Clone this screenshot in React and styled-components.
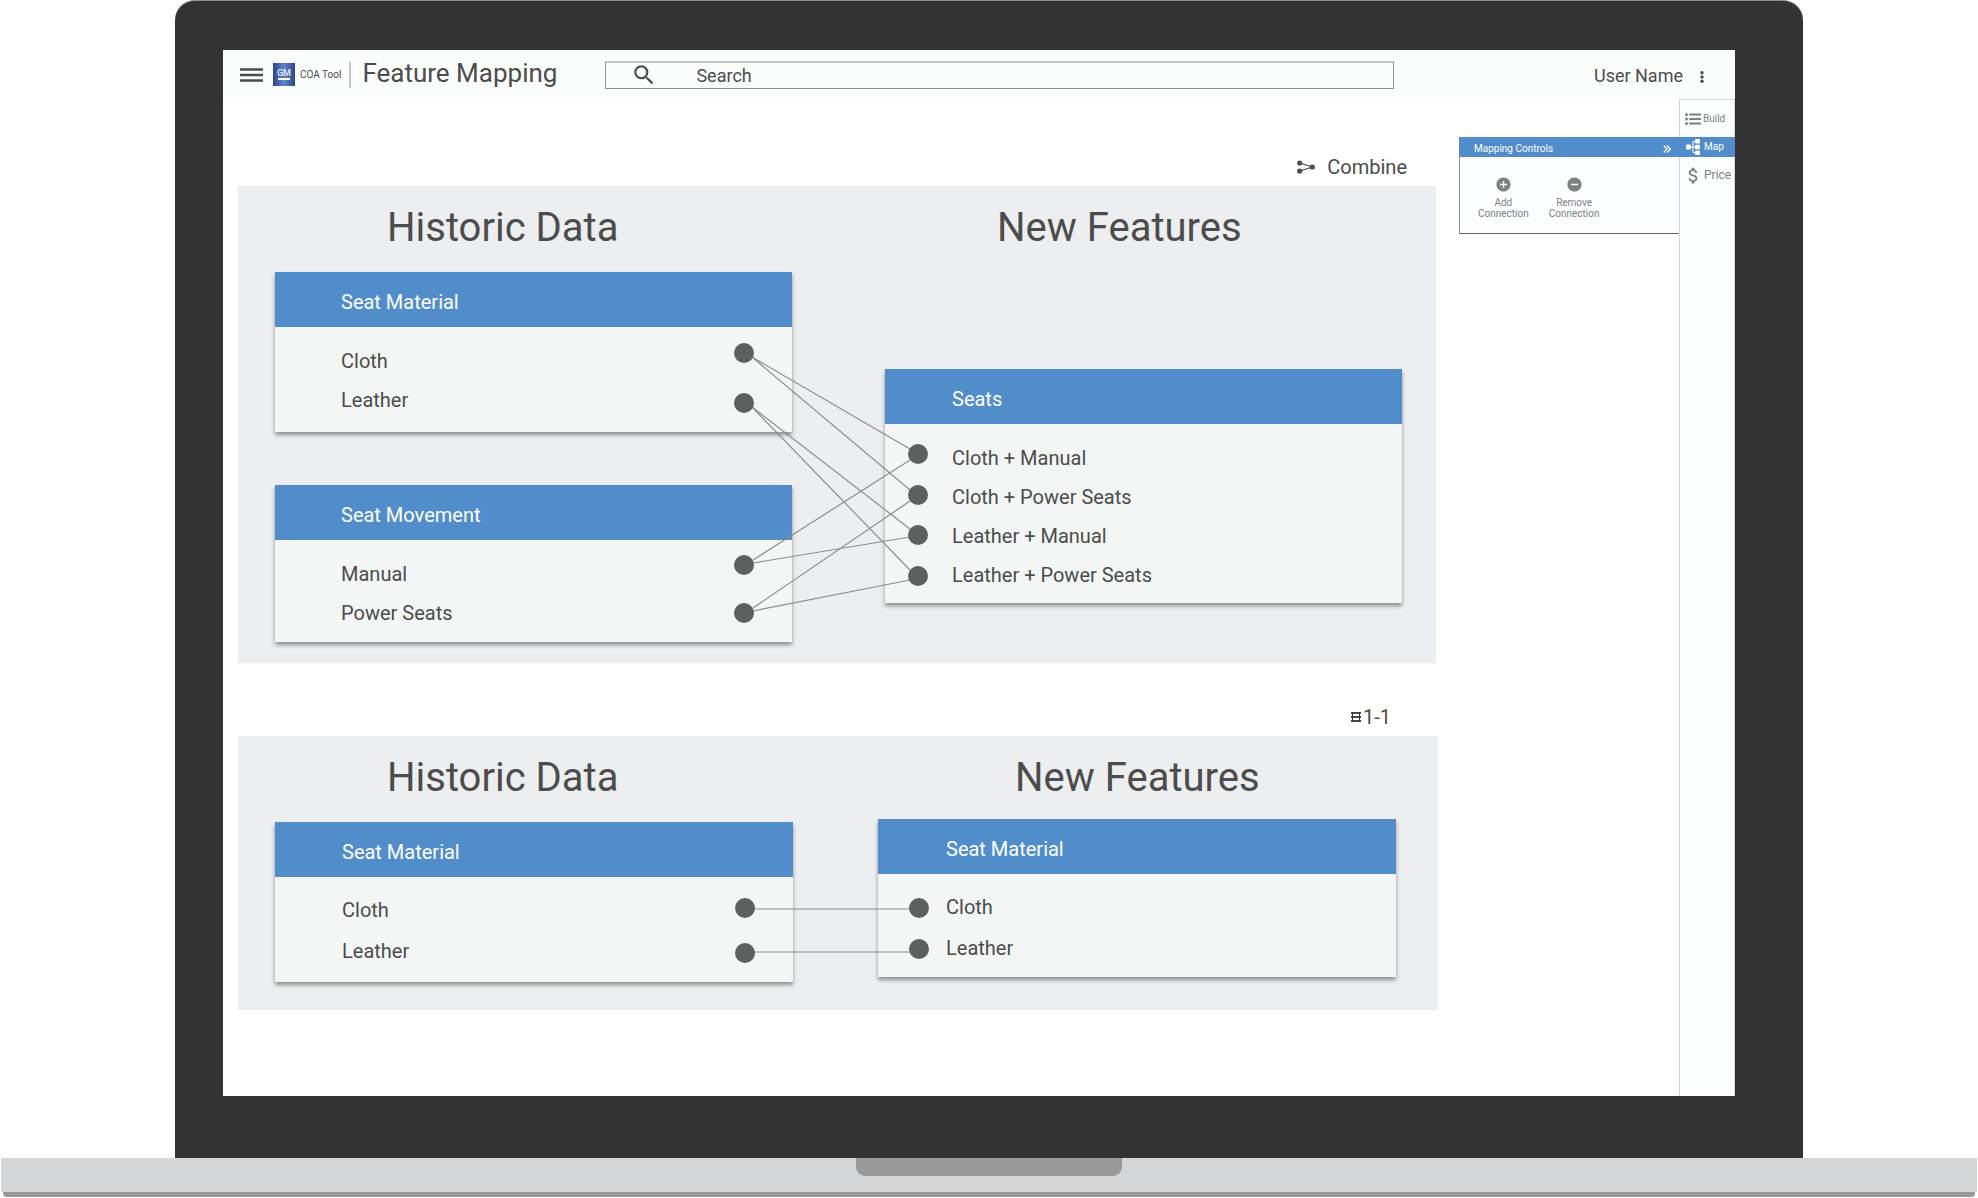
import styled, { createGlobalStyle } from "styled-components";
import {
  MdAddCircle,
  MdAttachMoney,
  MdRemoveCircle,
  MdSearch,
} from "react-icons/md";

const combine = {
  columnGap: 93,
  padRight: 34,
  padBottom: 21,
  left: {
    titleIndent: 112,
    offset: 20,
    textIndent: 66,
    cards: [
      { title: "Seat Material", rows: ["Cloth", "Leather"], padBottom: 12 },
      { title: "Seat Movement", rows: ["Manual", "Power Seats"], padBottom: 9 },
    ],
  },
  right: {
    titleIndent: 112,
    offset: 117,
    textIndent: 67,
    cards: [
      {
        title: "Seats",
        rows: [
          "Cloth + Manual",
          "Cloth + Power Seats",
          "Leather + Manual",
          "Leather + Power Seats",
        ],
        padBottom: 8,
      },
    ],
  },
  // measured from the left edge of the gap between the columns
  dots: [
    [-48, 167],
    [-48, 217],
    [-48, 379],
    [-48, 427],
    [126, 268],
    [126, 309],
    [126, 349],
    [126, 390],
  ],
  wires: [
    [-40, 171, 118, 263],
    [-40, 171, 118, 304],
    [-40, 221, 118, 343],
    [-40, 221, 118, 384],
    [-39, 374, 118, 274],
    [-39, 377, 118, 351],
    [-39, 422, 118, 315],
    [-39, 425, 118, 394],
  ],
};

const oneToOne = {
  columnGap: 85,
  padRight: 42,
  padBottom: 28,
  tall: true,
  left: {
    titleIndent: 112,
    offset: 20,
    textIndent: 67,
    cards: [
      { title: "Seat Material", rows: ["Cloth", "Leather"], padBottom: 10 },
    ],
  },
  right: {
    titleIndent: 137,
    offset: 17,
    textIndent: 68,
    cards: [
      { title: "Seat Material", rows: ["Cloth", "Leather"], padBottom: 8 },
    ],
  },
  dots: [
    [-48, 172],
    [-48, 217],
    [126, 172],
    [126, 213],
  ],
  wires: [
    [-48, 173, 126, 173],
    [-48, 216, 126, 216],
  ],
};

function Logo() {
  return (
    <svg width="22" height="23" viewBox="0 0 22 23" aria-hidden="true">
      <defs>
        <linearGradient id="logo" x1="0" x2="1" y1="0" y2="0">
          <stop offset="0" stopColor="#2b4488" />
          <stop offset="0.5" stopColor="#6484c9" />
          <stop offset="1" stopColor="#2b4488" />
        </linearGradient>
      </defs>
      <rect width="22" height="23" fill="url(#logo)" />
      <text x="11" y="13" textAnchor="middle" fontSize="9" fontWeight="500" fill="#e8edf8">
        GM
      </text>
      <rect x="5" y="15" width="12" height="2" fill="#fff" />
    </svg>
  );
}

function MoreIcon() {
  return (
    <svg width="4" height="12" viewBox="0 0 4 12" aria-hidden="true">
      <g fill="currentColor">
        <circle cx="2" cy="1.7" r="1.7" />
        <circle cx="2" cy="6" r="1.7" />
        <circle cx="2" cy="10.3" r="1.7" />
      </g>
    </svg>
  );
}

function ListIcon() {
  return (
    <svg width="16" height="12" viewBox="0 0 16 12" aria-hidden="true">
      <g fill="currentColor">
        <circle cx="1.5" cy="1.5" r="1.5" />
        <circle cx="1.5" cy="6" r="1.5" />
        <circle cx="1.5" cy="10.5" r="1.5" />
      </g>
      <path d="M4.2 1.5H16M4.2 6H16M4.2 10.5H16" stroke="currentColor" strokeWidth="1.8" />
    </svg>
  );
}

function MapIcon() {
  return (
    <svg width="14" height="16" viewBox="0 0 14 16" aria-hidden="true">
      <g fill="currentColor">
        <rect x="0" y="5.5" width="5" height="5" rx="1" />
        <rect x="9" y="0" width="5" height="4.5" rx="1" />
        <rect x="9" y="5.75" width="5" height="4.5" rx="1" />
        <rect x="9" y="11.5" width="5" height="4.5" rx="1" />
      </g>
      <path d="M5 8h4M9 2.5H7v11h2" fill="none" stroke="currentColor" />
    </svg>
  );
}

function CombineIcon() {
  return (
    <svg width="18" height="14" viewBox="0 0 18 14" aria-hidden="true">
      <path d="M2.5 3 15.5 7 2.5 11" fill="none" stroke="currentColor" strokeWidth="1.3" />
      <g fill="currentColor">
        <circle cx="2.7" cy="3" r="2.6" />
        <circle cx="2.7" cy="11" r="2.6" />
        <circle cx="15.3" cy="7" r="2.6" />
      </g>
    </svg>
  );
}

function OneToOneIcon() {
  return (
    <svg width="10" height="10" viewBox="0 0 10 10" aria-hidden="true">
      <path d="M0 1h10M0 5h10M0 9h10" stroke="#111" strokeWidth="1.6" />
      <path d="M1.5 0v10M8.5 0v10" stroke="#333" />
    </svg>
  );
}

function Column({ title, titleIndent, textIndent, offset, cards, tall }) {
  return (
    <ColumnBox>
      <ColumnTitle $indent={titleIndent}>{title}</ColumnTitle>
      <Stack $offset={offset}>
        {cards.map((card) => (
          <Card key={card.title}>
            <CardTitle $indent={textIndent}>{card.title}</CardTitle>
            <Rows $indent={textIndent} $tall={tall} $bottom={card.padBottom}>
              {card.rows.map((row) => (
                <li key={row}>{row}</li>
              ))}
            </Rows>
          </Card>
        ))}
      </Stack>
    </ColumnBox>
  );
}

// two columns of feature cards, with the connections drawn across the gap
function Mapping({ data }) {
  return (
    <Board $gap={data.columnGap} $right={data.padRight} $bottom={data.padBottom} $wide={data.tall}>
      <Column title="Historic Data" tall={data.tall} {...data.left} />
      <Wires aria-hidden="true">
        {data.wires.map(([x1, y1, x2, y2]) => (
          <line key={`${y1}-${y2}`} x1={x1} y1={y1} x2={x2} y2={y2} />
        ))}
        {data.dots.map(([cx, cy]) => (
          <circle key={`${cx}-${cy}`} cx={cx} cy={cy} r="10" />
        ))}
      </Wires>
      <Column title="New Features" tall={data.tall} {...data.right} />
    </Board>
  );
}

function App() {
  return (
    <Laptop>
      <GlobalStyle />
      <Bezel>
        <Screen>
          <Header>
            <MenuButton aria-label="Menu">
              <svg width="23" height="14" viewBox="0 0 23 14">
                <path d="M0 1.5h23M0 7h23M0 12.5h23" stroke="currentColor" strokeWidth="2.6" />
              </svg>
            </MenuButton>
            <Logo />
            <ToolName>COA Tool</ToolName>
            <PageTitle>Feature Mapping</PageTitle>
            <Search>
              <label htmlFor="search" aria-label="Search">
                <MdSearch size={26} />
              </label>
              <input id="search" type="text" placeholder="Search" />
            </Search>
            <User>
              User Name
              <button aria-label="More">
                <MoreIcon />
              </button>
            </User>
          </Header>

          <Body>
            <Main>
              <Action $top={49} $right={31} $gap={12}>
                <CombineIcon />
                Combine
              </Action>
              <Mapping data={combine} />
              <Action $top={35} $right={47} $gap={2}>
                <OneToOneIcon />
                1-1
              </Action>
              <Mapping data={oneToOne} />
            </Main>

            <Controls>
              <ControlsTitle>
                Mapping Controls
                <button aria-label="Collapse">
                  <svg width="8" height="8" viewBox="0 0 8 8">
                    <path d="M.7.5 4 4 .7 7.5M4 .5 7.3 4 4 7.5" fill="none" stroke="currentColor" strokeWidth="1.2" />
                  </svg>
                </button>
              </ControlsTitle>
              <ControlsBody>
                <Control>
                  <MdAddCircle size={17} />
                  Add
                  <br />
                  Connection
                </Control>
                <Control>
                  <MdRemoveCircle size={17} />
                  Remove
                  <br />
                  Connection
                </Control>
              </ControlsBody>
            </Controls>

            <Rail>
              <Tab>
                <ListIcon />
                Build
              </Tab>
              <Tab $active>
                <MapIcon />
                Map
              </Tab>
              <Tab $large>
                <MdAttachMoney size={21} />
                Price
              </Tab>
            </Rail>
          </Body>
        </Screen>
      </Bezel>
      <Base>
        <Notch />
      </Base>
      <Foot />
    </Laptop>
  );
}

const GlobalStyle = createGlobalStyle`
  * {
    box-sizing: border-box;
  }

  body {
    margin: 0;
    background: #fff;
    color: #4b4c4b;
    font-family: Roboto, "Liberation Sans", sans-serif;
  }

  button,
  input {
    font: inherit;
    color: inherit;
  }

  button {
    border: 0;
    padding: 0;
    background: none;
    cursor: pointer;
  }
`;

const Laptop = styled.div`
  display: flex;
  flex-direction: column;
  min-height: 100vh;
  padding-bottom: 1px;
`;

const Bezel = styled.div`
  flex: 1;
  display: flex;
  margin: 0 175px;
  padding: 49px 68px 62px 48px;
  border-top: 1px solid #8f908f;
  border-radius: 20px 20px 0 0;
  background: #333;
`;

const Screen = styled.div`
  flex: 1;
  display: flex;
  flex-direction: column;
  min-width: 0;
  background: #fff;
`;

const Base = styled.div`
  display: flex;
  justify-content: center;
  height: 34px;
  margin: 0 1px;
  background: #d4d5d7;
`;

const Notch = styled.div`
  width: 266px;
  height: 18px;
  border-radius: 0 0 9px 9px;
  background: #999;
`;

const Foot = styled.div`
  height: 5px;
  margin: 0 3px;
  border-radius: 0 0 4px 4px;
  background: #999;
`;

const Header = styled.header`
  display: flex;
  align-items: center;
  height: 49px;
  padding: 0 31px 0 17px;
  background: #fbfdfc;
`;

const MenuButton = styled.button`
  display: flex;
  margin-right: 10px;
`;

const ToolName = styled.span`
  margin: 0 8px 0 5px;
  font-size: 10px;
  line-height: 14px;
  white-space: nowrap;
`;

const PageTitle = styled.h1`
  margin: 0 48px 0 0;
  padding: 0 0 4px 11px;
  border-left: 2px solid #c3c5c4;
  font-size: 26px;
  font-weight: 400;
  line-height: 22px;
  white-space: nowrap;
`;

const Search = styled.form`
  flex: 1;
  display: flex;
  align-items: center;
  height: 28px;
  margin-right: 200px;
  padding-left: 25px;
  border: 1px solid #8f9291;
  border-top: 2px solid #c3c5c4;

  label {
    display: flex;
    margin-right: 39px;
  }

  input {
    flex: 1;
    min-width: 0;
    padding: 2px 0 0;
    border: 0;
    outline: 0;
    background: none;
    font-size: 18px;
    line-height: 22px;
  }

  input::placeholder {
    color: #4b4c4b;
    opacity: 1;
  }
`;

const User = styled.div`
  display: flex;
  align-items: center;
  gap: 17px;
  padding-top: 2px;
  font-size: 18px;
  line-height: 24px;
  white-space: nowrap;

  button {
    display: flex;
    padding-top: 2px;
  }
`;

const Body = styled.div`
  flex: 1;
  display: flex;
`;

const Main = styled.main`
  flex: 1;
  display: flex;
  flex-direction: column;
  min-width: 0;
  padding: 0 21px 24px 15px;
`;

const Action = styled.button`
  align-self: flex-end;
  display: flex;
  align-items: center;
  gap: ${(p) => p.$gap}px;
  height: 38px;
  margin: ${(p) => p.$top}px ${(p) => p.$right}px 0 0;
  font-size: 20px;
  line-height: 24px;
`;

const Board = styled.section`
  display: grid;
  grid-template-columns: minmax(0, 1fr) ${(p) => p.$gap}px minmax(0, 1fr);
  margin-right: ${(p) => (p.$wide ? 0 : 2)}px;
  padding: 0 ${(p) => p.$right}px ${(p) => p.$bottom}px 37px;
  background: #edeef0;
`;

const ColumnBox = styled.div`
  padding-top: 18px;
`;

const ColumnTitle = styled.h2`
  margin: 0;
  padding-left: ${(p) => p.$indent}px;
  font-size: 40px;
  font-weight: 400;
  line-height: 48px;
  white-space: nowrap;
`;

const Stack = styled.div`
  display: flex;
  flex-direction: column;
  gap: 53px;
  margin-top: ${(p) => p.$offset}px;
`;

const Card = styled.article`
  background: #f4f6f5;
  box-shadow: 0 3px 4px rgba(0, 0, 0, 0.4);
  font-size: 20px;
`;

const CardTitle = styled.h3`
  margin: 0;
  padding: 5px 0 0 ${(p) => p.$indent}px;
  background: #528dcb;
  color: #fff;
  font-size: 20px;
  font-weight: 400;
  line-height: 50px;
`;

const Rows = styled.ul`
  margin: 0;
  padding: ${(p) => (p.$tall ? 13 : 15)}px 0 ${(p) => p.$bottom}px ${(p) => p.$indent}px;
  list-style: none;
  line-height: ${(p) => (p.$tall ? 41 : 39)}px;
`;

// sits in the gap column and spills over the cards on both sides
const Wires = styled.svg`
  width: 100%;
  height: 100%;
  overflow: visible;
  position: relative;
  z-index: 1;
  pointer-events: none;

  line {
    stroke: #8b8d8c;
    stroke-width: 1.2;
  }

  circle {
    fill: #5e605f;
  }
`;

const Controls = styled.aside`
  width: 220px;
  margin-top: 38px;
  color: #7f8180;
`;

const ControlsTitle = styled.div`
  display: flex;
  align-items: center;
  justify-content: space-between;
  height: 20px;
  padding: 4px 8px 0 15px;
  background: #528dcb;
  color: #fff;
  font-size: 10px;
  line-height: 14px;

  button {
    display: flex;
  }
`;

const ControlsBody = styled.div`
  display: flex;
  gap: 20px;
  height: 77px;
  padding: 19px 0 0 18px;
  border-left: 1px solid #8f9291;
  border-bottom: 1px solid #666;
  background: #fcfdfe;
`;

const Control = styled.button`
  align-self: flex-start;
  font-size: 10px;
  line-height: 11px;

  svg {
    display: block;
    margin: 0 auto 4px;
  }
`;

const Rail = styled.nav`
  width: 56px;
  padding-top: 1px;
  border: 1px solid #d3d5d6;
  border-width: 1px 1px 0;
  background: #fcfdfd;
`;

const Tab = styled.button`
  display: flex;
  align-items: center;
  gap: ${(p) => (p.$active ? 4 : p.$large ? 0 : 2)}px;
  width: ${(p) => (p.$active ? "calc(100% + 2px)" : "100%")};
  height: ${(p) => (p.$active ? 20 : 36)}px;
  margin-left: ${(p) => (p.$active ? -1 : 0)}px;
  padding-left: ${(p) => (p.$active ? 7 : p.$large ? 3 : 5)}px;
  background: ${(p) => (p.$active ? "#528dcb" : "none")};
  color: ${(p) => (p.$active ? "#fff" : "#7f8180")};
  font-size: ${(p) => (p.$large ? 12 : 10)}px;
  line-height: 14px;
`;

export default App;
